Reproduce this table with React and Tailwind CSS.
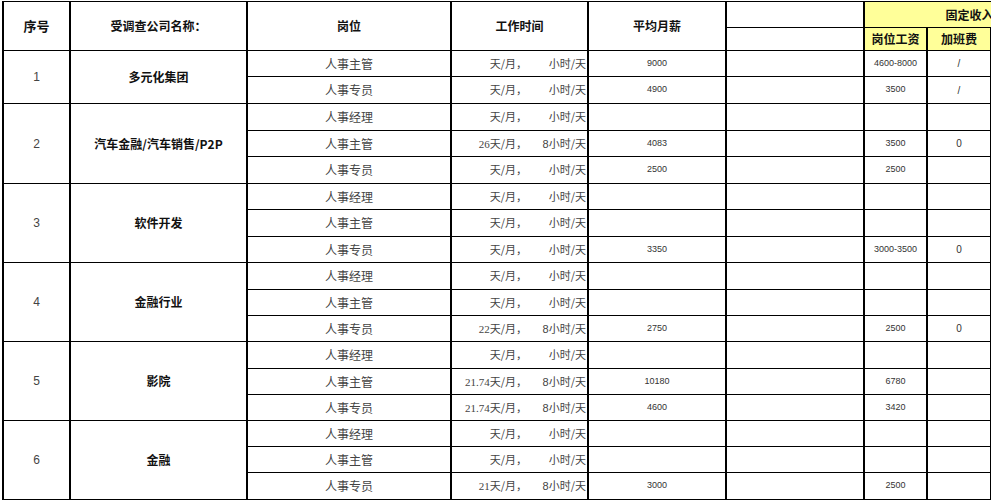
import React from "react";

const cjk = "font-['Noto_Sans_CJK_SC',sans-serif]";

const groups = [
  {
    no: "1",
    name: "多元化集团",
    rows: [
      { pos: "人事主管", d: "", h: "", pay: "9000", base: "4600-8000", ot: "/", ht: "h-[26px]" },
      { pos: "人事专员", d: "", h: "", pay: "4900", base: "3500", ot: "/", ht: "h-[27px]" },
    ],
  },
  {
    no: "2",
    name: "汽车金融/汽车销售/P2P",
    rows: [
      { pos: "人事经理", d: "", h: "", pay: "", base: "", ot: "", ht: "h-[27px]" },
      { pos: "人事主管", d: "26", h: "8", pay: "4083", base: "3500", ot: "0", ht: "h-[26px]" },
      { pos: "人事专员", d: "", h: "", pay: "2500", base: "2500", ot: "", ht: "h-[27px]" },
    ],
  },
  {
    no: "3",
    name: "软件开发",
    rows: [
      { pos: "人事经理", d: "", h: "", pay: "", base: "", ot: "", ht: "h-[26px]" },
      { pos: "人事主管", d: "", h: "", pay: "", base: "", ot: "", ht: "h-[27px]" },
      { pos: "人事专员", d: "", h: "", pay: "3350", base: "3000-3500", ot: "0", ht: "h-[26px]" },
    ],
  },
  {
    no: "4",
    name: "金融行业",
    rows: [
      { pos: "人事经理", d: "", h: "", pay: "", base: "", ot: "", ht: "h-[27px]" },
      { pos: "人事主管", d: "", h: "", pay: "", base: "", ot: "", ht: "h-[26px]" },
      { pos: "人事专员", d: "22", h: "8", pay: "2750", base: "2500", ot: "0", ht: "h-[26px]" },
    ],
  },
  {
    no: "5",
    name: "影院",
    rows: [
      { pos: "人事经理", d: "", h: "", pay: "", base: "", ot: "", ht: "h-[27px]" },
      { pos: "人事主管", d: "21.74", h: "8", pay: "10180", base: "6780", ot: "", ht: "h-[26px]" },
      { pos: "人事专员", d: "21.74", h: "8", pay: "4600", base: "3420", ot: "", ht: "h-[26px]" },
    ],
  },
  {
    no: "6",
    name: "金融",
    rows: [
      { pos: "人事经理", d: "", h: "", pay: "", base: "", ot: "", ht: "h-[26px]" },
      { pos: "人事主管", d: "", h: "", pay: "", base: "", ot: "", ht: "h-[26px]" },
      { pos: "人事专员", d: "21", h: "8", pay: "3000", base: "2500", ot: "", ht: "h-[27px]" },
    ],
  },
];

const cell = "border-y border-x-2 border-black p-0";
const head = `${cell} ${cjk} text-[12px] font-bold text-[#111]`;
const num = "font-['Liberation_Sans',sans-serif] text-[9px] text-[#333] text-center";

export default function App() {
  return (
    <div className="w-[991px] h-[500px] overflow-hidden bg-white pl-[2px] pt-[1px]">
      <table className="border-collapse table-fixed w-[1074px] border-t border-t-[#999]">
        <colgroup>
          <col className="w-[67px]" />
          <col className="w-[177px]" />
          <col className="w-[204px]" />
          <col className="w-[137px]" />
          <col className="w-[138px]" />
          <col className="w-[138px]" />
          <col className="w-[63px]" />
          <col className="w-[64px]" />
          <col className="w-[84px]" />
        </colgroup>
        <thead>
          <tr className="h-[26px]">
            <th rowSpan={2} className={`${head} text-[13px]`}>序号</th>
            <th rowSpan={2} className={head}>受调查公司名称：</th>
            <th rowSpan={2} className={head}>岗位</th>
            <th rowSpan={2} className={head}>工作时间</th>
            <th rowSpan={2} className={head}>平均月薪</th>
            <th className={head}></th>
            <th colSpan={3} className={`${head} bg-[#ffff99]`}>固定收入</th>
          </tr>
          <tr className="h-[23px]">
            <th className={head}></th>
            <th className={`${head} bg-[#ffff99]`}>岗位工资</th>
            <th className={`${head} bg-[#ffff99] border-l border-l-[#666]`}>加班费</th>
            <th className={`${head} bg-[#ffff99]`}></th>
          </tr>
        </thead>
        <tbody>
          {groups.map((g) =>
            g.rows.map((r, i) => (
              <tr key={g.no + r.pos} className={r.ht}>
                {i === 0 && (
                  <td
                    rowSpan={g.rows.length}
                    className={`${cell} font-['Liberation_Sans',sans-serif] text-[12px] text-[#444] text-center`}
                  >
                    {g.no}
                  </td>
                )}
                {i === 0 && (
                  <td
                    rowSpan={g.rows.length}
                    className={`${cell} ${cjk} text-[12px] font-bold text-[#111] text-center`}
                  >
                    {g.name}
                  </td>
                )}
                <td className={`${cell} ${cjk} text-[12px] text-[#444] text-center`}>{r.pos}</td>
                <td className={`${cell} ${cjk} text-[11px] text-[#444]`}>
                  <div className="flex justify-end items-center pr-[1px]">
                    <span>
                      <span className="font-['Liberation_Serif',serif]">{r.d}</span>天/月，
                    </span>
                    <span className="w-[59px] text-right">
                      <span className="font-['Liberation_Sans',sans-serif]">{r.h}</span>小时/天
                    </span>
                  </div>
                </td>
                <td className={`${cell} ${num}`}>{r.pay}</td>
                <td className={cell}></td>
                <td className={`${cell} ${num}`}>{r.base}</td>
                <td className={`${cell} border-l border-l-[#666] ${num} text-[10px]`}>{r.ot}</td>
                <td className={cell}></td>
              </tr>
            ))
          )}
        </tbody>
      </table>
    </div>
  );
}
